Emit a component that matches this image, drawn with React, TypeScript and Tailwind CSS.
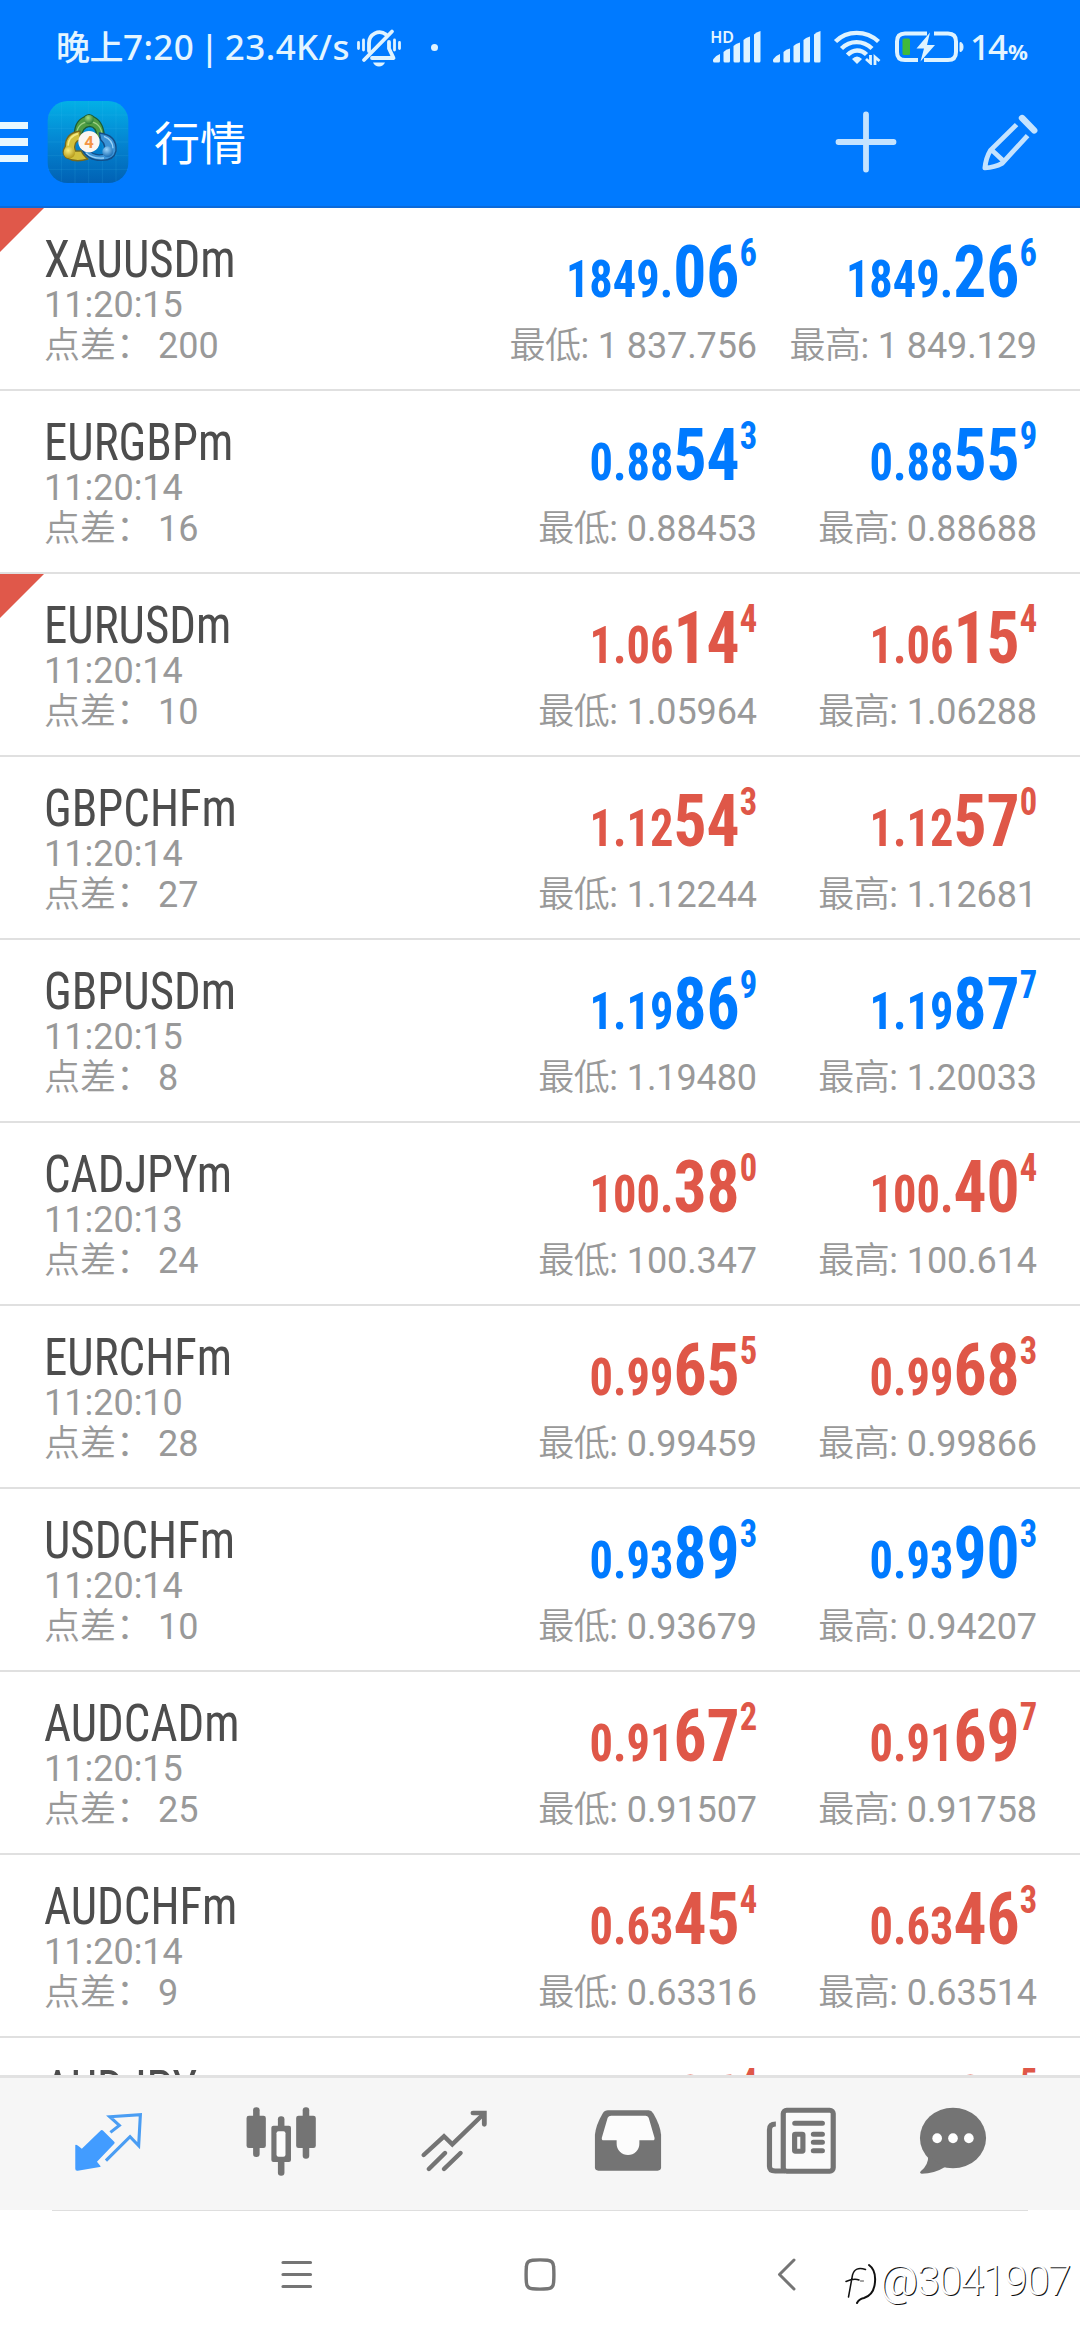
import React from "react";

type Price = [string, string, string];

type Quote = {
  symbol: string;
  time: string;
  spread: string;
  up: boolean;
  flagged?: boolean;
  bid: Price;
  ask: Price;
  low: string;
  high: string;
};

const quotes: Quote[] = [
  { symbol: "XAUUSDm", time: "11:20:15", spread: "200", up: true, flagged: true, bid: ["1849.", "06", "6"], ask: ["1849.", "26", "6"], low: "1 837.756", high: "1 849.129" },
  { symbol: "EURGBPm", time: "11:20:14", spread: "16", up: true, bid: ["0.88", "54", "3"], ask: ["0.88", "55", "9"], low: "0.88453", high: "0.88688" },
  { symbol: "EURUSDm", time: "11:20:14", spread: "10", up: false, flagged: true, bid: ["1.06", "14", "4"], ask: ["1.06", "15", "4"], low: "1.05964", high: "1.06288" },
  { symbol: "GBPCHFm", time: "11:20:14", spread: "27", up: false, bid: ["1.12", "54", "3"], ask: ["1.12", "57", "0"], low: "1.12244", high: "1.12681" },
  { symbol: "GBPUSDm", time: "11:20:15", spread: "8", up: true, bid: ["1.19", "86", "9"], ask: ["1.19", "87", "7"], low: "1.19480", high: "1.20033" },
  { symbol: "CADJPYm", time: "11:20:13", spread: "24", up: false, bid: ["100.", "38", "0"], ask: ["100.", "40", "4"], low: "100.347", high: "100.614" },
  { symbol: "EURCHFm", time: "11:20:10", spread: "28", up: false, bid: ["0.99", "65", "5"], ask: ["0.99", "68", "3"], low: "0.99459", high: "0.99866" },
  { symbol: "USDCHFm", time: "11:20:14", spread: "10", up: true, bid: ["0.93", "89", "3"], ask: ["0.93", "90", "3"], low: "0.93679", high: "0.94207" },
  { symbol: "AUDCADm", time: "11:20:15", spread: "25", up: false, bid: ["0.91", "67", "2"], ask: ["0.91", "69", "7"], low: "0.91507", high: "0.91758" },
  { symbol: "AUDCHFm", time: "11:20:14", spread: "9", up: false, bid: ["0.63", "45", "4"], ask: ["0.63", "46", "3"], low: "0.63316", high: "0.63514" },
];

function BellOff() {
  return (
    <svg className="h-[42px] w-[46px]" viewBox="0 0 46 42" fill="none" stroke="#dff3ff" strokeWidth="3.8" strokeLinecap="round">
      <path d="M13 25V17a10.5 10.5 0 0 1 17-8.500M33 16v6.500l4.500 9.500H16" strokeLinejoin="round" />
      <path d="M36 5.500 8 34" />
      <path d="M2.500 16.500v6M7.500 14v10M38.500 14v10M43.500 16.500v6" strokeWidth="2.800" />
      <path d="M17 36.500h12q-2 4-6 4t-6-4z" fill="#dff3ff" stroke="none" />
    </svg>
  );
}

function SignalBars() {
  return (
    <svg className="h-8 w-[50px]" viewBox="0 0 50 32" fill="#dff3ff">
      <path d="M1 28.500q2.500-4 7-5.500v7q0 1.500-1.500 1.500h-4q-1.500 0-1.500-1.500z" />
      <path d="M11.500 21q2.500-2.700 6.500-3.500v12.500q0 1.500-1.500 1.500h-3.500q-1.500 0-1.500-1.500z" />
      <path d="M21.500 15q2-2.500 6.500-3.500v18.500q0 1.500-1.500 1.500h-3.500q-1.500 0-1.500-1.500z" />
      <path d="M31.500 9q2-2.500 6.500-3.500v24.500q0 1.500-1.500 1.500h-3.500q-1.500 0-1.500-1.500z" />
      <path d="M42 3.500q2-2.500 6.500-3.500v30q0 1.500-1.500 1.500h-3.500q-1.500 0-1.500-1.500z" />
    </svg>
  );
}

function Wifi() {
  return (
    <svg className="h-9 w-[50px]" viewBox="0 0 50 36" fill="none" stroke="#dff3ff" strokeWidth="4.400">
      <path d="M3.500 12.500C15 1 34 1 46.500 12.500" />
      <path d="M9.500 19.500C18 11 31 11 40 19.500" />
      <path d="M15.500 26C21 20 29 20 34.500 25.500" />
      <path d="M25 35l-5-5q5-5 10 0z" fill="#dff3ff" stroke="none" />
      <path d="M38.500 26v8l-4.500-4M43 36v-8l4.500 4" strokeWidth="2.800" />
    </svg>
  );
}

function Battery() {
  return (
    <svg className="h-8 w-[70px]" viewBox="0 0 70 32" fill="none">
      <path d="M33 2.500H11Q3 2.500 3 10.500V21q0 8 8 8h13M40 2.500h14q8 0 8 8V21q0 8-8 8H30" stroke="#dff3ff" strokeWidth="4" />
      <path d="M66 11.500q3 0 3 4.500t-3 4.500z" fill="#dff3ff" stroke="#dff3ff" />
      <rect x="8.500" y="7.500" width="7.500" height="16.500" rx="1.500" fill="#41b93b" />
      <path d="M36 1.500 22.500 17.500h7.500L26.500 30.500 41 14h-8z" fill="#dff3ff" />
    </svg>
  );
}

function AppLogo() {
  return (
    <svg className="h-[82px] w-[82px]" viewBox="21 16 242 246">
      <defs>
        <linearGradient id="tile" x1="0" y1="0" x2="0" y2="1">
          <stop offset="0" stopColor="#03b0e6" />
          <stop offset="0.450" stopColor="#0489d4" />
          <stop offset="1" stopColor="#0161b4" />
        </linearGradient>
        <radialGradient id="leaf" cx="0.400" cy="0.300" r="0.700">
          <stop offset="0" stopColor="#a5da7b" />
          <stop offset="1" stopColor="#257a35" />
        </radialGradient>
        <radialGradient id="gold" cx="0.400" cy="0.300" r="0.700">
          <stop offset="0" stopColor="#f8ed7c" />
          <stop offset="1" stopColor="#b59a1b" />
        </radialGradient>
        <radialGradient id="sky" cx="0.400" cy="0.300" r="0.700">
          <stop offset="0" stopColor="#9ad4fb" />
          <stop offset="1" stopColor="#1b6fb6" />
        </radialGradient>
      </defs>
      <rect x="21" y="16" width="242" height="246" rx="60" fill="url(#tile)" />
      <path d="M62 20v238M103 16v246M144 16v246M185 16v246M226 20v238M21 58h242M21 98h242M21 139h242M21 180h242M21 221h242" stroke="#43c1f0" strokeOpacity="0.220" strokeWidth="2" />
      <g strokeLinejoin="round">
        <path d="M101 130Q98 78 130 64 145 50 160 64 192 80 191 132L168 122Q168 94 147 92 124 94 122 126z" fill="#4f9d43" stroke="#1d5c35" strokeWidth="4" />
        <path d="M108 118Q108 82 146 77 182 82 184 118" fill="none" stroke="#9dcf83" strokeWidth="4" />
        <path d="M176 112Q230 118 226 166 220 194 184 194 142 196 122 158L142 162Q160 182 188 176 200 150 180 132z" fill="#3c93d6" stroke="#124e88" strokeWidth="4" />
        <path d="M190 122Q216 132 217 158M136 172Q156 190 190 187" fill="none" stroke="#9bd3f7" strokeWidth="4" />
        <path d="M118 106Q74 112 74 152 60 170 76 186 104 202 142 190 126 178 122 166L104 166Q96 140 118 132z" fill="#d2c03c" stroke="#75691e" strokeWidth="4" />
        <path d="M112 114Q84 122 82 150" fill="none" stroke="#f3ea86" strokeWidth="5" />
      </g>
      <circle cx="145" cy="72" r="14" fill="url(#leaf)" />
      <circle cx="86" cy="171" r="17" fill="url(#gold)" />
      <circle cx="201" cy="168" r="16" fill="url(#sky)" />
      <circle cx="145" cy="138" r="32" fill="#fbf6f1" />
      <text x="145" y="156" textAnchor="middle" fontSize="50" fontWeight="700" fill="#f39445" fontFamily="Roboto, sans-serif">4</text>
    </svg>
  );
}

function Pencil() {
  return (
    <svg className="h-[61px] w-[62px]" viewBox="1268 333 180 183" preserveAspectRatio="none" fill="none" stroke="#c4e3ff">
      <path d="M1380 371 1304 448Q1291 470 1288 501 1316 499 1338 487L1412 404M1306 445 1342 480" strokeWidth="14" strokeLinejoin="round" />
      <path d="M1396 351 1431 388" strokeWidth="19" strokeLinecap="round" />
    </svg>
  );
}

function Header() {
  return (
    <header className="h-[208px] shrink-0 border-b-2 border-[#0b6ada] bg-[#007aff] text-white">
      <div className="flex h-[94px] items-center pr-[55px] pl-[56px] font-['Noto_Sans','Noto_Sans_CJK_SC',sans-serif] text-[35px] leading-none font-medium text-[#e4f5ff]">
        <span className="mb-[2px] w-[300px] tracking-[0.4px] whitespace-pre [word-spacing:-4px]">
          <span className="font-['Noto_Sans_CJK_SC',sans-serif] text-[34px] tracking-[-0.500px]">晚上</span>7:20 | 23.4K/s
        </span>
        <BellOff />
        <span className="ml-[29px] h-[7px] w-[7px] rounded-full bg-[#dff3ff]" />
        <span className="-mr-[22px] mb-[20px] ml-auto text-[16px] font-semibold">HD</span>
        <SignalBars />
        <span className="w-[10px]" />
        <SignalBars />
        <span className="w-[10px]" />
        <Wifi />
        <span className="w-[12px]" />
        <Battery />
        <span className="mb-[2px] ml-[6px] flex w-[55px] items-baseline text-[35px] tracking-[-2px]">
          14<span className="ml-[2px] text-[22px] font-bold">%</span>
        </span>
      </div>
      <div className="flex h-[96px] items-center">
        <div className="flex w-[28px] flex-col gap-[9px] py-1">
          <span className="h-[7.500px] bg-[#e8f8ff]" />
          <span className="h-[7.500px] bg-[#e8f8ff]" />
          <span className="h-[7.500px] bg-[#e8f8ff]" />
        </div>
        <div className="ml-[19px]">
          <AppLogo />
        </div>
        <h1 className="mb-[4px] ml-[25px] font-['Noto_Sans_CJK_SC',sans-serif] text-[46px] leading-none font-normal">行情</h1>
        <svg className="ml-auto h-[64px] w-[64px]" viewBox="0 0 64 64" stroke="#c4e3ff" strokeWidth="5.800" strokeLinecap="round">
          <path d="M32 4.500v55M4.500 32h55" />
        </svg>
        <div className="mr-[40px] ml-[80px]">
          <Pencil />
        </div>
      </div>
    </header>
  );
}

function PriceCell({ price, label, range }: { price: Price; label: string; range: string }) {
  return (
    <div className="flex w-[280px] shrink-0 flex-col items-end pt-[29px] whitespace-nowrap">
      <div className="-mr-px h-[72px] origin-right scale-x-[0.91] text-[72px] leading-[72px] font-bold [font-stretch:75%]">
        <span className="text-[51px] leading-none">{price[0]}</span>
        {price[1]}
        <span className="align-[31px] text-[38px] leading-[0]">{price[2]}</span>
      </div>
      <div className="-mr-px mt-[17px] text-[36px] leading-[41px] tracking-[-0.100px] text-[#999]">
        <span className="font-[350] tracking-[-0.500px]">{label}</span>: {range}
      </div>
    </div>
  );
}

function QuoteRow({ q }: { q: Quote }) {
  return (
    <li className="relative flex h-[183px] shrink-0 border-b-[2px] border-[#e0e0e0] pr-[44px] pl-[44px]">
      {q.flagged && <span className="absolute top-0 left-0 h-[44px] w-[44px] bg-[#e0584a] [clip-path:polygon(0_0,100%_0,0_100%)]" />}
      <div className="flex-1 pt-[26px] text-[36px] whitespace-pre text-[#999]">
        <div className="origin-left scale-x-[0.92] text-[51px] leading-[51px] text-[#4d4d4d] [font-stretch:75%]">{q.symbol}</div>
        <div className="leading-[40px]">{q.time}</div>
        <div className="mt-px flex leading-[41px]">
          <span className="w-[114px] font-[350]">点差：</span>
          {q.spread}
        </div>
      </div>
      <div className={q.up ? "flex text-[#007aff]" : "flex text-[#df5748]"}>
        <PriceCell price={q.bid} label="最低" range={q.low} />
        <PriceCell price={q.ask} label="最高" range={q.high} />
      </div>
    </li>
  );
}

function Tab({ box, className, children }: { box: string; className: string; children: React.ReactNode }) {
  return (
    <svg className={className} viewBox={box} preserveAspectRatio="none">
      {children}
    </svg>
  );
}

function TabBar() {
  return (
    <nav className="flex h-[135px] shrink-0 border-t-[3px] border-[#e2e2e2] bg-[#f6f6f6] pt-[27px]">
      <Tab className="ml-[72px] h-[72px] w-[72px]" box="209.500 256 209 216">
        <path d="M219 376q4-2 10 4l9 7 54-54q4-4 8 0l32 33q3 3 0 6l-50 54 10 13q2 3-2 3l-64 11q-7 1-7-6z" fill="#429cff" />
        <path d="M321 338 347 317 319 291 408 285 403 378 378 351 308 423" fill="none" stroke="#4a9df3" strokeWidth="9" />
      </Tab>
      <Tab className="ml-[101px] h-[72px] w-[72px]" box="711.500 256 209 216">
        <g fill="#747474">
          <rect x="735" y="263" width="19" height="149" rx="9" />
          <rect x="716" y="288" width="56" height="97" rx="7" />
          <rect x="807" y="290" width="19" height="178" rx="9" />
          <rect x="788" y="318" width="57" height="109" rx="6" />
          <rect x="879" y="263" width="19" height="154" rx="9" />
          <rect x="860" y="288" width="57" height="97" rx="7" />
        </g>
        <rect x="803" y="335" width="26" height="76" rx="6" fill="#fcfcfc" />
      </Tab>
      <Tab className="ml-[101px] h-[72px] w-[72px]" box="1213.500 256 209 216">
        <g fill="none" stroke="#747474" strokeWidth="13" strokeLinecap="round">
          <path d="M1230 406 1289 350 1313 374 1403 284" />
          <path d="M1373 280H1406V314" strokeWidth="14" />
          <path d="M1245 448 1292 400M1289 448 1337 400" />
        </g>
      </Tab>
      <Tab className="ml-[102px] h-[72px] w-[72px]" box="149.500 256 209 216">
        <path d="M196 272H314Q322 272 328 282 347 315 350 345V443Q350 453 340 453H168Q158 453 158 443V345Q161 315 180 282 186 272 196 272z" fill="#747474" />
        <path d="M205 288H305Q311 288 314 294L331 354Q332 362 326 362H287V372a33 34 0 0 1-66 0V362H183Q177 362 178 354L195 294Q198 288 205 288z" fill="#fcfcfc" />
      </Tab>
      <Tab className="ml-[101px] h-[72px] w-[72px]" box="652.500 256 209 216">
        <g fill="none" stroke="#747474" strokeWidth="15">
          <rect x="705.500" y="271.500" width="145" height="183" rx="10" fill="#fafafa" />
          <path d="M684 313Q665.500 313 665.500 330V440Q665.500 454 682 454H710" />
          <path d="M739 311H819M793 344H819M793 368H819M793 393H819" strokeLinecap="round" />
          <rect x="738.500" y="343.500" width="24" height="51" rx="2" />
        </g>
      </Tab>
      <Tab className="ml-[80px] h-[72px] w-[72px]" box="1094.500 256 209 216">
        <g fill="#747474">
          <ellipse cx="1199" cy="355" rx="96" ry="91" />
          <path d="M1127 410Q1128 436 1106 454 1100 461 1108 462 1145 462 1176 442z" />
        </g>
        <g fill="#fff">
          <ellipse cx="1153" cy="356" rx="14" ry="15" />
          <ellipse cx="1199" cy="356" rx="14" ry="15" />
          <ellipse cx="1245" cy="356" rx="14" ry="15" />
        </g>
      </Tab>
    </nav>
  );
}

function SystemNav() {
  return (
    <footer className="relative flex h-[130px] shrink-0 bg-white pt-[46px]">
      <span className="absolute top-0 left-[52px] h-px w-[976px] bg-[#dedede]" />
      <svg className="ml-[279px] h-9 w-9" viewBox="0 0 36 36" stroke="#757575" strokeWidth="3.200" strokeLinecap="round">
        <path d="M4 6.500H31.500M4 18.500H31.500M4 30.500H31.500" />
      </svg>
      <svg className="ml-[207px] h-9 w-9" viewBox="0 0 36 36" fill="none" stroke="#757575" strokeWidth="3.400">
        <path d="M10.500 4.200Q18 3.500 25.500 4.200 31.300 4.700 31.600 10.500 32.200 18.500 31.600 26.500 31.300 32.300 25.500 32.800 18 33.500 10.500 32.800 4.700 32.300 4.400 26.500 3.800 18.500 4.400 10.500 4.700 4.700 10.500 4.200z" />
      </svg>
      <svg className="ml-[211px] h-9 w-9" viewBox="0 0 36 36" fill="none" stroke="#757575" strokeWidth="3" strokeLinecap="round" strokeLinejoin="round">
        <path d="M25 4 10.500 18.500 25 33" />
      </svg>
      <div className="absolute top-[47px] right-[10px] flex items-start">
        <svg className="mt-[6px] mr-px h-[42px] w-[34px]" viewBox="0 0 34 42" fill="none" stroke="#111" strokeLinecap="round">
          <path d="M20.500 6.500Q10 3 7.500 12L3.500 34M1 18.500Q9 15 14 17" strokeWidth="1.500" />
          <path d="M24 2Q31 7 30 19 29 32 19 35 14 36 12 40" strokeWidth="2" />
          <path d="M15.500 18h3" strokeWidth="0.800" />
        </svg>
        <span className="font-[Roboto,sans-serif] text-[42px] leading-[48px] font-light tracking-[-1.400px] text-white [text-shadow:1px_1px_0_#111]">@3041907</span>
      </div>
    </footer>
  );
}

export default function App() {
  return (
    <div className="flex h-[2340px] w-[1080px] flex-col overflow-hidden bg-white font-[Roboto,'Noto_Sans_CJK_SC',sans-serif]">
      <Header />
      <ul className="flex h-[1867px] shrink-0 flex-col overflow-hidden">
        {quotes.map((q) => (
          <QuoteRow key={q.symbol} q={q} />
        ))}
        <QuoteRow q={{ symbol: "AUDJPYm", time: "11:20:14", spread: "11", up: false, bid: ["90.", "86", "4"], ask: ["90.", "87", "5"], low: "90.745", high: "91.086" }} />
      </ul>
      <TabBar />
      <SystemNav />
    </div>
  );
}
